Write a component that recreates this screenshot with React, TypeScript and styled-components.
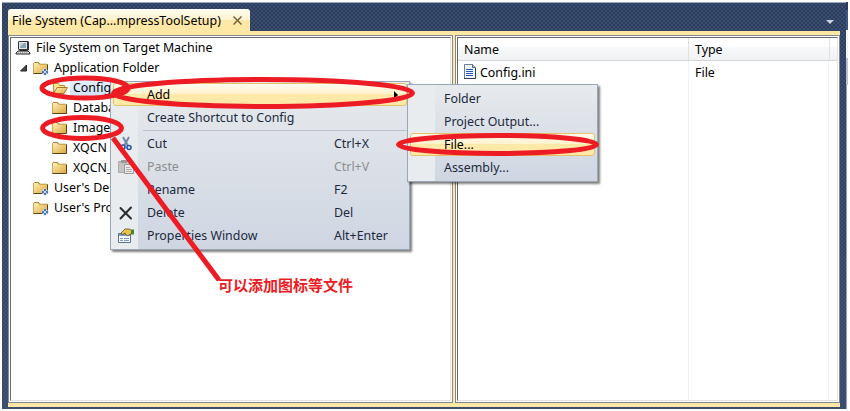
import React from "react";
import styled, { createGlobalStyle } from "styled-components";

const Global = createGlobalStyle`
  * {
    box-sizing: border-box;
  }
  body {
    margin: 0;
    background: #fff;
    overflow: hidden;
    font-family: "Noto Sans", "Open Sans", "Noto Sans CJK SC", sans-serif;
    font-size: 12.4px;
    color: #000;
  }
  svg {
    display: block;
    flex: none;
  }
`;

const Screen = styled.div`
  position: relative;
  width: 850px;
  height: 411px;
  padding: 2px 0 2px 2px;
  display: flex;
  background: #fff;
`;

const Shell = styled.div`
  width: 844px;
  height: 407px;
  padding: 6px 6px 2px;
  display: flex;
  flex-direction: column;
  border-top: 1px solid #9ba9c3;
  background-image: radial-gradient(rgba(80, 103, 145, 0.4) 0.7px, transparent 1px),
    radial-gradient(rgba(80, 103, 145, 0.4) 0.7px, transparent 1px),
    linear-gradient(#2c3d5b, #35496a);
  background-size: 4px 4px, 4px 4px, 100% 100%;
  background-position: 0 0, 2px 2px, 0 0;
`;

const TabBar = styled.div`
  height: 22px;
  display: flex;
  align-items: flex-start;
  justify-content: space-between;
`;

const Tab = styled.div`
  width: 242px;
  height: 22px;
  padding: 1px 8px 0 4px;
  display: flex;
  align-items: center;
  justify-content: space-between;
  border-radius: 3px 3px 0 0;
  background: linear-gradient(#fffcf2 0, #fff3cd 50%, #ffe8a6 50%, #ffe8a6 100%);
`;

const Arrow = styled.div`
  width: 0;
  margin: 11px 6px 0 0;
  border: 4px solid transparent;
  border-top-color: #ced4df;
  border-bottom: 0;
`;

const Frame = styled.div`
  height: 376px;
  padding: 4px 0;
  display: flex;
  gap: 2px;
  background: #ffe8a6;
`;

const Pane = styled.div<{ $width: number }>`
  width: ${(p) => p.$width}px;
  height: 368px;
  padding: 1px;
  border: 1px solid #828790;
  background: #fff;
`;

const PaneInner = styled.div`
  height: 100%;
  border: 1px solid #e3e3e3;
  border-top-color: #696969;
  border-left-color: #696969;
`;

const Text = styled.span`
  white-space: nowrap;
  line-height: 18px;
`;

const TreeRow = styled.div<{ $level: number }>`
  height: 20px;
  padding-left: ${(p) => [4, 22, 41][p.$level]}px;
  display: flex;
  align-items: center;
  gap: 2px;
`;

const TreeLabel = styled(Text)<{ $active?: boolean }>`
  height: 18px;
  padding: 0 2px 0 3px;
  background: ${(p) => (p.$active ? "linear-gradient(#e6f1fe, #cfe2fa)" : "none")};
`;

const Expander = styled.svg`
  margin: 0 2px 0 -14px;
`;

const ListHead = styled.div`
  height: 23px;
  display: flex;
  border-bottom: 1px solid #d5d5d5;
  background: linear-gradient(#fff 0, #fff 42%, #f7f8fa 42%, #f1f2f4 100%);
`;

const HeadCell = styled.div<{ $width: number }>`
  width: ${(p) => p.$width}px;
  padding: 3px 0 0 6px;
  border-right: 1px solid #dfe1e4;
`;

const ListBody = styled.div`
  height: 339px;
  display: flex;
`;

const ListCell = styled.div<{ $width: number }>`
  width: ${(p) => p.$width}px;
  padding: 3px 0 0 6px;
  display: flex;
  align-items: flex-start;
  gap: 4px;
  border-right: 1px solid #ebf3fd;
`;

const SideStrip = styled.div`
  width: 2px;
  display: flex;
  flex-direction: column;
`;

const StripPart = styled.div<{ $height: number; $bg: string; $edge?: boolean }>`
  height: ${(p) => p.$height}px;
  border-left: ${(p) => (p.$edge ? "1px solid #9a9fa8" : "none")};
  background: ${(p) => p.$bg};
`;

const Menu = styled.div<{ $x: number; $y: number; $width: number; $height: number; $top: number }>`
  position: absolute;
  left: ${(p) => p.$x}px;
  top: ${(p) => p.$y}px;
  width: ${(p) => p.$width}px;
  height: ${(p) => p.$height}px;
  padding: ${(p) => p.$top}px 2px 2px;
  border: 1px solid #9ba7b7;
  background: linear-gradient(90deg, #e9ecee 27px, transparent 27px),
    linear-gradient(#e7eaed, #cfd6e2);
  box-shadow: 2px 2px 2px rgba(0, 0, 0, 0.5);
  color: #1b293e;
`;

const MenuRow = styled.div<{ $active?: boolean; $disabled?: boolean }>`
  height: 23px;
  display: grid;
  grid-template-columns: 33px 187px 1fr;
  align-items: center;
  border: 1px solid ${(p) => (p.$active ? "#e5c365" : "transparent")};
  border-radius: 3px;
  background: ${(p) => (p.$active ? "linear-gradient(#fffbef 0, #fff2cb 50%, #ffe9a9 50%, #ffe9a9 100%)" : "none")};
  color: ${(p) => (p.$active ? "#000" : p.$disabled ? "#8b8d91" : "inherit")};
`;

const IconSlot = styled.span`
  padding-left: 4px;
`;

const SubArrow = styled.span`
  justify-self: end;
  margin-right: 8px;
  border: 4px solid transparent;
  border-left-color: #000;
  border-right: 0;
`;

const Separator = styled.div`
  height: 1px;
  margin: 1px 0 1px 30px;
  background: #bec3cb;
`;

const Marks = styled.svg`
  position: absolute;
  left: 0;
  top: 0;
  fill: none;
  stroke: #ed1c24;
  stroke-width: 5;
`;

const Note = styled.div`
  position: absolute;
  left: 218px;
  top: 275px;
  font: bold 15px/20px "Noto Sans CJK SC", sans-serif;
  color: #ed1c24;
  white-space: nowrap;
`;

const ComputerIcon = () => (
  <svg width="16" height="16" viewBox="0 0 16 16">
    <path d="M4 1h9l1 1v8l-2 1H5L3 9V2z" fill="#333" />
    <path d="M4 2h8v7H4z" fill="#e8e8e8" />
    <path d="M5 3h6v5H5z" fill="#87a5b4" />
    <path d="M5 3h4L5 7z" fill="#bdd1d8" />
    <path d="M3 11h10l2 2v1H1v-1z" fill="#ddd" stroke="#222" />
    <path d="M3 13h9" stroke="#777" strokeDasharray="1 1" />
  </svg>
);

const FolderIcon = ({ open, special }: { open?: boolean; special?: boolean }) => (
  <svg width="16" height="16" viewBox="0 0 16 16">
    <defs>
      <linearGradient id="folder" x2="1" y2="1">
        <stop stopColor="#fff3bd" />
        <stop offset="1" stopColor="#dba63a" />
      </linearGradient>
    </defs>
    {open ? (
      <>
        <path d="M1.5 13V3.5h5l1 2h5V8" fill="#ffe695" stroke="#bd8f2f" />
        <path d="M1.5 13.5L5 7.5h10.5l-3.500 6z" fill="url(#folder)" stroke="#a67725" />
      </>
    ) : (
      <>
        <path d="M.5 13.500v-10l1-1h4l1 2h8v9z" fill="url(#folder)" stroke="#d0a850" />
        <path d="M.5 3.500l1-1h4l1 1.500" fill="none" stroke="#a9813a" />
        <path d="M7 3.500h7" stroke="#e9dfc4" />
        <path d="M.5 13.500h14v-9" fill="none" stroke="#55431f" />
      </>
    )}
    {special && (
      <>
        <path d="M12 8l4 4-4 4-4-4z" fill="#fff" />
        <path d="M12 8.500l1.500 1.500-1.500 1.500-1.500-1.500zM12 12.500l1.500 1.500-1.500 1.500-1.500-1.500zM10 10.500l1.500 1.500-1.500 1.500-1.500-1.500zM14 10.500l1.500 1.500-1.500 1.500-1.500-1.500z" fill="#2d66b0" />
      </>
    )}
  </svg>
);

const FileIcon = () => (
  <svg width="12" height="16" viewBox="0 0 12 16">
    <path d="M.5.5h8l3 3v11H.5z" fill="#f2f6ff" stroke="#6b7d9c" />
    <path d="M8.5.5v3h3" fill="#bccae0" stroke="#52627e" />
    <path d="M2 5.500h7M2 7.500h7M2 9.500h7M2 11.500h7" stroke="#2358b8" />
    <path d="M0 14.500h11.500V4" fill="none" stroke="#303b50" />
  </svg>
);

const CutIcon = () => (
  <svg width="16" height="16" viewBox="0 0 16 16">
    <path d="M5 1l5 9M11 1L6 10" stroke="#7189a9" strokeWidth="2" />
    <circle cx="5" cy="11" r="2" fill="none" stroke="#2859a8" strokeWidth="1.600" />
    <circle cx="11" cy="11.500" r="2" fill="none" stroke="#2859a8" strokeWidth="1.600" />
  </svg>
);

const PasteIcon = () => (
  <svg width="16" height="16" viewBox="0 0 16 16">
    <path d="M.5 2.500h11v11H.5z" fill="#c4c4c4" stroke="#aaa" />
    <path d="M3 1h6v3H3z" fill="#999" />
    <path d="M6.500 5.500h6l3 3v6h-9z" fill="#ededed" stroke="#999" />
    <path d="M8 8.500h4M8 10.500h6M8 12.500h6" stroke="#aaa" />
  </svg>
);

const DeleteIcon = () => (
  <svg width="16" height="16" viewBox="0 0 16 16">
    <path d="M2.500 3l10.500 10.500M13 2.500L2.500 13.500" stroke="#292b30" strokeWidth="2" strokeLinecap="round" />
  </svg>
);

const PropertiesIcon = () => (
  <svg width="16" height="16" viewBox="0 0 16 16">
    <path d="M.5 5.500h12v9H.5z" fill="#fff" stroke="#597197" />
    <path d="M1 7h11" stroke="#7aa0d8" strokeWidth="2" />
    <path d="M2 10.500h3M6 10.500h5M2 12.500h3M6 12.500h5" stroke="#8199bd" />
    <path d="M3 5l4-4h4l2 1h3v4h-4l-2 2-2-1-1-2-3 2z" fill="#e9c447" stroke="#5c4c20" strokeWidth=".8" />
    <path d="M13 2h3v4h-3z" fill="#43872f" />
  </svg>
);

const tree = [
  { label: "Config", open: true },
  { label: "Databa" },
  { label: "Image" },
  { label: "XQCN" },
  { label: "XQCN_" },
];

const commands = [
  { label: "Cut", keys: "Ctrl+X", icon: <CutIcon /> },
  { label: "Paste", keys: "Ctrl+V", icon: <PasteIcon />, disabled: true },
  { label: "Rename", keys: "F2" },
  { label: "Delete", keys: "Del", icon: <DeleteIcon /> },
  { label: "Properties Window", keys: "Alt+Enter", icon: <PropertiesIcon /> },
];

function FileTree() {
  return (
    <Pane $width={445}>
      <PaneInner>
        <TreeRow $level={0}>
          <ComputerIcon />
          <TreeLabel>File System on Target Machine</TreeLabel>
        </TreeRow>
        <TreeRow $level={1}>
          <Expander width="10" height="10">
            <path d="M7.500 2v6h-6z" fill="#444" stroke="#222" />
          </Expander>
          <FolderIcon special />
          <TreeLabel>Application Folder</TreeLabel>
        </TreeRow>
        {tree.map((item) => (
          <TreeRow $level={2} key={item.label}>
            <FolderIcon open={item.open} />
            <TreeLabel $active={item.open}>{item.label}</TreeLabel>
          </TreeRow>
        ))}
        {["User's De", "User's Pro"].map((label) => (
          <TreeRow $level={1} key={label}>
            <FolderIcon special />
            <TreeLabel>{label}</TreeLabel>
          </TreeRow>
        ))}
      </PaneInner>
    </Pane>
  );
}

function FileList() {
  return (
    <Pane $width={385}>
      <PaneInner>
        <ListHead>
          <HeadCell $width={231}><Text>Name</Text></HeadCell>
          <HeadCell $width={141}><Text>Type</Text></HeadCell>
        </ListHead>
        <ListBody>
          <ListCell $width={231}><FileIcon /><Text>Config.ini</Text></ListCell>
          <ListCell $width={140}><Text>File</Text></ListCell>
        </ListBody>
      </PaneInner>
    </Pane>
  );
}

export default function App() {
  return (
    <Screen>
      <Global />
      <Shell>
        <TabBar>
          <Tab>
            <Text>File System (Cap...mpressToolSetup)</Text>
            <svg width="9" height="9"><path d="M.5.5l8 8M8.500.5l-8 8" stroke="#75633d" strokeWidth="1.500" /></svg>
          </Tab>
          <Arrow />
        </TabBar>
        <Frame>
          <FileTree />
          <FileList />
        </Frame>
      </Shell>
      <SideStrip>
        <StripPart $height={8} $bg="#2c3d5b" />
        <StripPart $height={20} $bg="#415782" />
        <StripPart $height={28} $bg="#f4f4f4" />
        <StripPart $height={27} $bg="#b9c3d1" />
        <StripPart $height={324} $bg="#fff" $edge />
      </SideStrip>

      <Menu $x={110} $y={81} $width={300} $height={169} $top={1}>
        <MenuRow $active>
          <IconSlot />
          <Text>Add</Text>
          <SubArrow />
        </MenuRow>
        <MenuRow><IconSlot /><Text>Create Shortcut to Config</Text></MenuRow>
        <Separator />
        {commands.map((item) => (
          <MenuRow $disabled={item.disabled} key={item.label}>
            <IconSlot>{item.icon}</IconSlot>
            <Text>{item.label}</Text>
            <Text>{item.keys}</Text>
          </MenuRow>
        ))}
      </Menu>

      <Menu $x={407} $y={84} $width={191} $height={98} $top={2}>
        {["Folder", "Project Output...", "File...", "Assembly..."].map((label) => (
          <MenuRow $active={label === "File..."} key={label}>
            <IconSlot />
            <Text>{label}</Text>
          </MenuRow>
        ))}
      </Menu>

      <Marks width="850" height="411">
        <ellipse cx="85" cy="88" rx="43" ry="10" />
        <ellipse cx="82" cy="128" rx="39.5" ry="10.5" />
        <ellipse cx="263" cy="93" rx="149.5" ry="13.5" />
        <ellipse cx="497.5" cy="144.500" rx="99" ry="9" />
        <path d="M113 138L219 280" />
      </Marks>
      <Note>可以添加图标等文件</Note>
    </Screen>
  );
}
